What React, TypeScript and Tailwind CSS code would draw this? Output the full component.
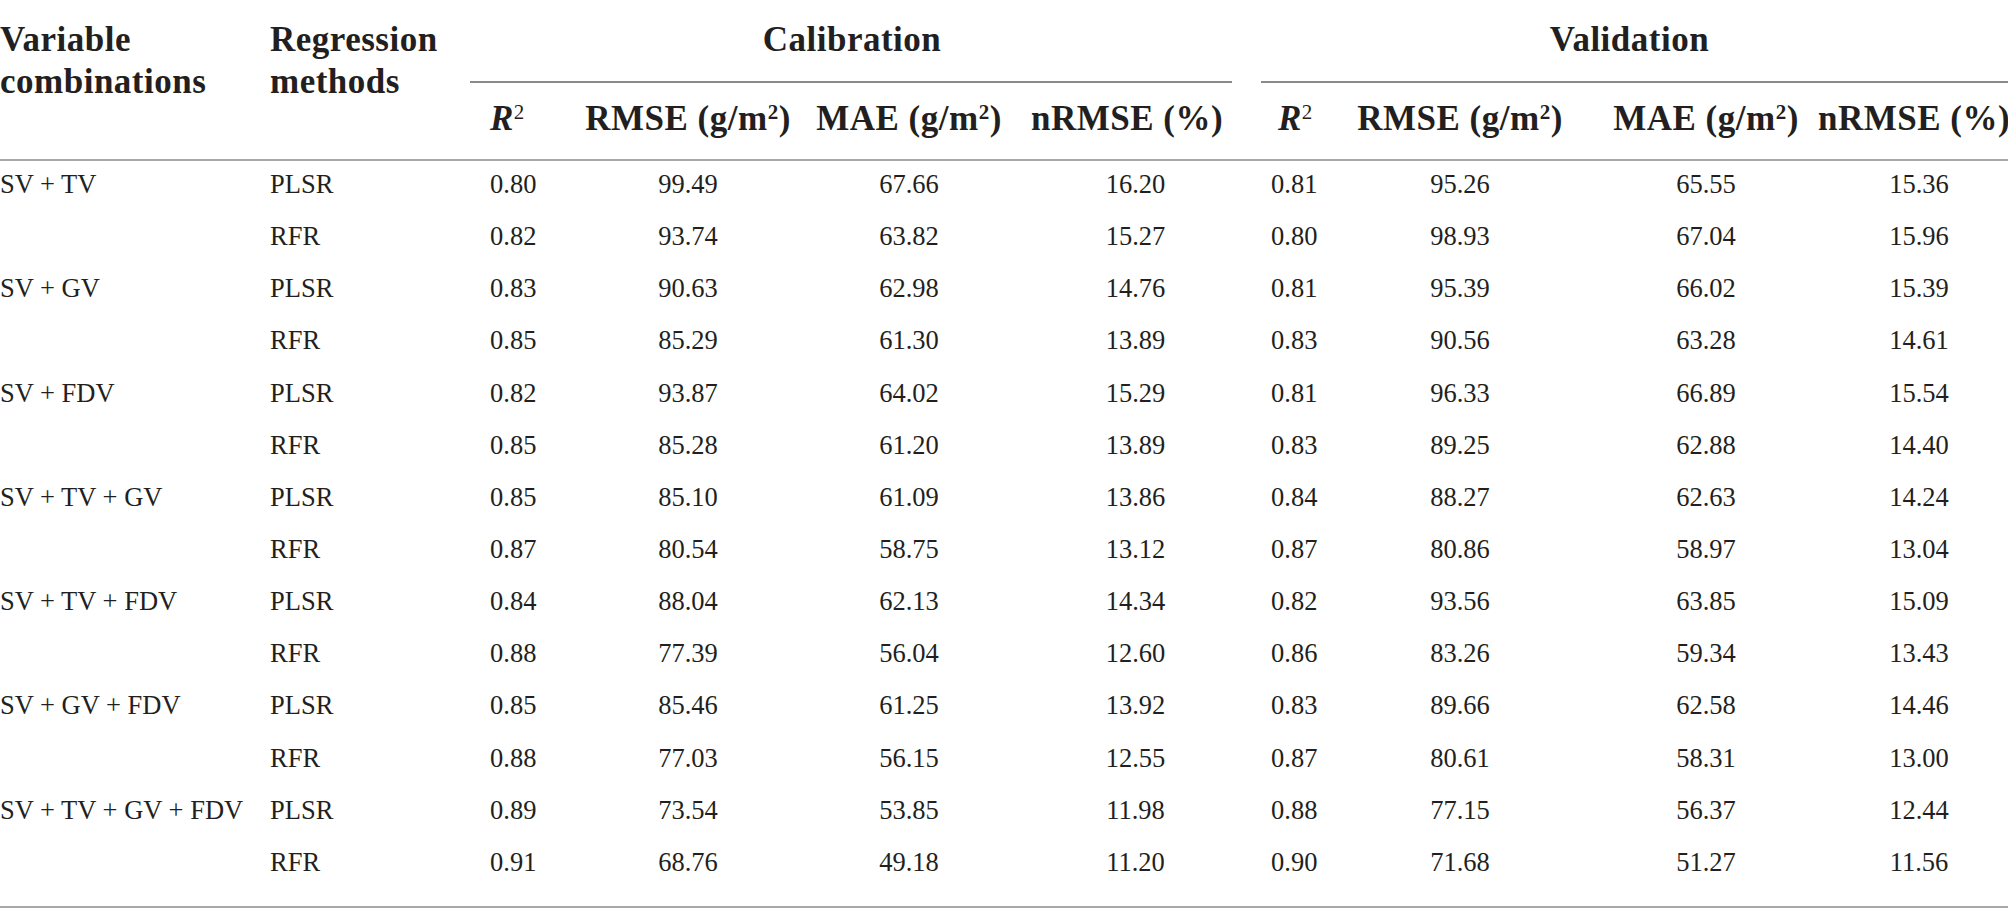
import React from "react";

type Row = {
  combo: string;
  method: string;
  cal: string[];
  val: string[];
};

const rows: Row[] = [
  { combo: "SV + TV", method: "PLSR", cal: ["0.80", "99.49", "67.66", "16.20"], val: ["0.81", "95.26", "65.55", "15.36"] },
  { combo: "", method: "RFR", cal: ["0.82", "93.74", "63.82", "15.27"], val: ["0.80", "98.93", "67.04", "15.96"] },
  { combo: "SV + GV", method: "PLSR", cal: ["0.83", "90.63", "62.98", "14.76"], val: ["0.81", "95.39", "66.02", "15.39"] },
  { combo: "", method: "RFR", cal: ["0.85", "85.29", "61.30", "13.89"], val: ["0.83", "90.56", "63.28", "14.61"] },
  { combo: "SV + FDV", method: "PLSR", cal: ["0.82", "93.87", "64.02", "15.29"], val: ["0.81", "96.33", "66.89", "15.54"] },
  { combo: "", method: "RFR", cal: ["0.85", "85.28", "61.20", "13.89"], val: ["0.83", "89.25", "62.88", "14.40"] },
  { combo: "SV + TV + GV", method: "PLSR", cal: ["0.85", "85.10", "61.09", "13.86"], val: ["0.84", "88.27", "62.63", "14.24"] },
  { combo: "", method: "RFR", cal: ["0.87", "80.54", "58.75", "13.12"], val: ["0.87", "80.86", "58.97", "13.04"] },
  { combo: "SV + TV + FDV", method: "PLSR", cal: ["0.84", "88.04", "62.13", "14.34"], val: ["0.82", "93.56", "63.85", "15.09"] },
  { combo: "", method: "RFR", cal: ["0.88", "77.39", "56.04", "12.60"], val: ["0.86", "83.26", "59.34", "13.43"] },
  { combo: "SV + GV + FDV", method: "PLSR", cal: ["0.85", "85.46", "61.25", "13.92"], val: ["0.83", "89.66", "62.58", "14.46"] },
  { combo: "", method: "RFR", cal: ["0.88", "77.03", "56.15", "12.55"], val: ["0.87", "80.61", "58.31", "13.00"] },
  { combo: "SV + TV + GV + FDV", method: "PLSR", cal: ["0.89", "73.54", "53.85", "11.98"], val: ["0.88", "77.15", "56.37", "12.44"] },
  { combo: "", method: "RFR", cal: ["0.91", "68.76", "49.18", "11.20"], val: ["0.90", "71.68", "51.27", "11.56"] },
];

const grid =
  "grid grid-cols-[270px_200px_118px_200px_242px_202px_29px_99px_200px_292px_156px]";

const Unit = ({ label }: { label: string }) => (
  <span className="whitespace-nowrap">
    {label} (g/m<sup className="text-[60%]">2</sup>)
  </span>
);

const R2 = () => (
  <span className="whitespace-nowrap">
    <i>R</i>
    <sup className="text-[60%] font-normal">2</sup>
  </span>
);

const SubHeads = ({ validation }: { validation?: boolean }) => (
  <>
    <div className={`flex items-center pb-[4px] ${validation ? "pl-[17px]" : "pl-[20px]"}`}>
      <R2 />
    </div>
    <div className="flex items-center justify-center pb-[4px]">
      <Unit label="RMSE" />
    </div>
    <div className="flex items-center justify-center pb-[4px]">
      <Unit label="MAE" />
    </div>
    <div
      className={`flex items-center justify-center pb-[4px] whitespace-nowrap ${validation ? "pr-[32px]" : "pr-[8px]"}`}
    >
      nRMSE (%)
    </div>
  </>
);

const DataCells = ({ vals, validation }: { vals: string[]; validation?: boolean }) => (
  <>
    <div className={validation ? "pl-[10px]" : "pl-[20px]"}>{vals[0]}</div>
    <div className="text-center">{vals[1]}</div>
    <div className="text-center">{vals[2]}</div>
    <div className={validation ? "text-center pr-[22px]" : "text-center pl-[9px]"}>{vals[3]}</div>
  </>
);

export default function App() {
  return (
    <div className="w-[2008px] h-[924px] bg-white text-[#231f20] font-['Liberation_Serif',serif]">
      <div className="border-b-2 border-[#a8a8a8] pb-[15px]">
        {/* header */}
        <div
          className={`${grid} grid-rows-[83px_76px] border-b-2 border-[#a8a8a8] text-[35px] font-bold tracking-[0.5px]`}
        >
          <div className="row-span-2 pt-[19px] leading-[42px]">
            Variable
            <br />
            combinations
          </div>
          <div className="row-span-2 pt-[19px] leading-[42px]">
            Regression
            <br />
            methods
          </div>
          <div className="col-span-4 flex items-center justify-center border-b-2 border-[#8a8a8a] pl-[2px]">
            Calibration
          </div>
          <div />
          <div className="col-span-4 flex items-center justify-center border-b-2 border-[#8a8a8a] pr-[10px]">
            Validation
          </div>
          <SubHeads />
          <div />
          <SubHeads validation />
        </div>

        {/* body */}
        <div className="text-[26.5px] leading-[46px]">
          {rows.map((r, i) => (
            <div key={i} className={`${grid} h-[52.15px] items-start`}>
              <div className="whitespace-nowrap">{r.combo}</div>
              <div>{r.method}</div>
              <DataCells vals={r.cal} />
              <div />
              <DataCells vals={r.val} validation />
            </div>
          ))}
        </div>
      </div>
    </div>
  );
}
